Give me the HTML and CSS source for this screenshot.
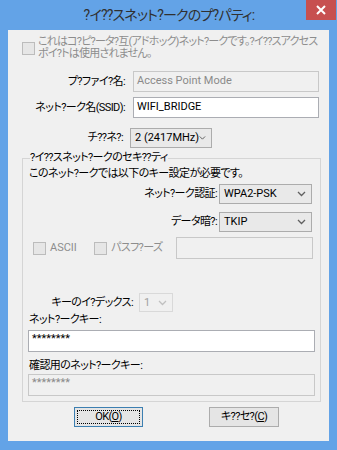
FILE: index.html
```html
<!DOCTYPE html>
<html>
<head>
    <title>ワイヤレスネットワークのプロパティ</title>
    <link rel="stylesheet" href="styles.css">
</head>
<body>
    <div class="window">
        <div class="titlebar">
            <div class="title">?イ??スネット?ークのプ?パティ:</div>
            <div class="close">
                <svg width="10" height="10" viewBox="0 0 10 10"><path d="M1 1 L9 9 M9 1 L1 9" stroke="#fff" stroke-width="2"/></svg>
            </div>
        </div>

        <div class="client">
            <div class="notice">
                <span class="check"></span>
                <span class="notice-text">これはコ?ピ?ータ?互(アドホック)ネット?ークです。?イ??スアクセス<br>ポイ?トは使用されません。</span>
            </div>

            <div class="field-row row-profile">
                <span class="label">プ?ファイ?名:</span>
                <div class="textbox disabled">Access Point Mode</div>
            </div>
            <div class="field-row row-ssid">
                <span class="label">ネット?ーク名(SSID):</span>
                <div class="textbox">WIFI_BRIDGE</div>
            </div>
            <div class="field-row row-channel">
                <span class="label">チ??ネ?:</span>
                <div class="combo combo-channel">
                    <span>2 (2417MHz)</span>
                    <svg class="chev" width="9" height="6" viewBox="0 0 9 6"><path d="M1 1 L4.5 4.5 L8 1" fill="none" stroke="#606060" stroke-width="1.3"/></svg>
                </div>
            </div>

            <fieldset class="group">
                <legend>?イ??スネット?ークのセキ??ティ</legend>
                <div class="group-intro">このネット?ークでは以下のキー設定が必要です。</div>

                <div class="sec-row row-auth">
                    <span class="sec-label">ネット?ーク認証:</span>
                    <div class="combo combo-sec">
                        <span>WPA2-PSK</span>
                        <svg class="chev" width="9" height="6" viewBox="0 0 9 6"><path d="M1 1 L4.5 4.5 L8 1" fill="none" stroke="#606060" stroke-width="1.3"/></svg>
                    </div>
                </div>
                <div class="sec-row row-data">
                    <span class="sec-label">データ暗?:</span>
                    <div class="combo combo-sec">
                        <span>TKIP</span>
                        <svg class="chev" width="9" height="6" viewBox="0 0 9 6"><path d="M1 1 L4.5 4.5 L8 1" fill="none" stroke="#606060" stroke-width="1.3"/></svg>
                    </div>
                </div>

                <div class="pass-row">
                    <span class="check"></span>
                    <span class="check-label ascii">ASCII</span>
                    <span class="check"></span>
                    <span class="check-label">パスフ?ーズ</span>
                    <div class="textbox disabled pass-box"></div>
                </div>

                <div class="index-row">
                    <span class="index-label">キーのイ?デックス:</span>
                    <div class="combo combo-index disabled">
                        <span>1</span>
                        <svg class="chev" width="9" height="6" viewBox="0 0 9 6"><path d="M1 1 L4.5 4.5 L8 1" fill="none" stroke="#c0c0c0" stroke-width="1.3"/></svg>
                    </div>
                </div>

                <div class="key-label">ネット?ークキー:</div>
                <div class="textbox key-box">********</div>
                <div class="key-label confirm-label">確認用のネット?ークキー:</div>
                <div class="textbox key-box disabled confirm-box">********</div>
            </fieldset>

            <div class="buttons">
                <div class="button default"><span class="focus">OK(<u>O</u>)</span></div>
                <div class="button">キ??セ?(<u>C</u>)</div>
            </div>
        </div>
    </div>
</body>
</html>
```

FILE: styles.css
```css
body {
    margin: 0;
    font-family: Roboto, "Noto Sans CJK JP", sans-serif;
    font-size: 11px;
    line-height: 12px;
    letter-spacing: -0.6px;
    color: #000;
    font-feature-settings: "palt";
    white-space: nowrap;
}
.window {
    width: 337px;
    height: 450px;
    box-sizing: border-box;
    padding: 0 8px 9px 8px;
    background: #63a3e7;
    display: flex;
    flex-direction: column;
}
.titlebar {
    height: 30px;
    display: flex;
    align-items: flex-start;
    margin-right: -7px;
}
.title {
    flex: 1;
    padding-left: 24px;
    text-align: center;
    font-size: 14px;
    line-height: 30px;
    letter-spacing: -0.8px;
    color: #303030;
}
.close {
    width: 30px;
    height: 20px;
    background: #c75050;
    display: flex;
    align-items: center;
    justify-content: center;
}
.client {
    flex: 1;
    background: #f0f0f0;
    padding-top: 7px;
}
.notice {
    display: flex;
    align-items: center;
    padding-left: 14px;
    color: #8d8d8d;
}
.check {
    width: 11px;
    height: 11px;
    border: 1px solid #bcbcbc;
    background: #e6e6e6;
    flex: none;
}
.notice-text {
    margin-left: 3px;
    margin-top: -1px;
    letter-spacing: -0.8px;
}
.field-row {
    display: flex;
    align-items: center;
}
.row-profile {
    margin-top: 11px;
}
.row-ssid {
    margin-top: 5px;
}
.row-channel {
    margin-top: 10px;
}
.label {
    width: 117px;
    text-align: right;
    margin-right: 8px;
}
.row-channel .label {
    width: 115px;
    margin-right: 7px;
}
.textbox {
    width: 186px;
    height: 21px;
    box-sizing: border-box;
    border: 1px solid #abadb3;
    background: #fff;
    padding: 3px 0 0 3px;
    letter-spacing: 0;
}
.textbox.disabled {
    background: #f0f0f0;
    border-color: #c8c8c8;
    color: #8a8a8a;
}
.combo {
    height: 20px;
    box-sizing: border-box;
    border: 1px solid #acacac;
    background: #e9e9e9;
    display: flex;
    align-items: center;
    justify-content: space-between;
    padding: 0 5px 0 4px;
    letter-spacing: 0;
}
.combo.disabled {
    border-color: #d9d9d9;
    background: #f0f0f0;
    color: #a0a0a0;
}
.combo-channel {
    width: 82px;
}
.group {
    margin: 4px 8px 0 14px;
    padding: 0 5px 5px 6px;
    border: 1px solid #d5d5d5;
}
.group legend {
    padding: 0;
    margin-left: 1px;
}
.group-intro {
    margin-top: 4px;
}
.sec-row {
    display: flex;
    align-items: center;
    justify-content: flex-end;
    padding-right: 3px;
}
.row-auth {
    margin-top: 4px;
}
.row-data {
    margin-top: 8px;
}
.sec-label {
    margin-right: 2px;
}
.combo-sec {
    width: 93px;
}
.pass-row {
    display: flex;
    align-items: center;
    margin-top: 5px;
    padding-left: 4px;
    color: #8d8d8d;
}
.check-label {
    margin-left: 4px;
}
.ascii {
    width: 44px;
    letter-spacing: 0;
}
.pass-box {
    width: 137px;
    height: 22px;
    margin-left: auto;
    margin-right: 2px;
}
.index-row {
    display: flex;
    align-items: center;
    margin-top: 34px;
}
.index-label {
    width: 104px;
    text-align: right;
    margin-right: 6px;
}
.combo-index {
    width: 34px;
    height: 19px;
}
.key-label {
    margin-top: 2px;
}
.confirm-label {
    margin-top: 8px;
}
.key-box {
    width: auto;
    height: 22px;
    margin: 4px 0 0 -1px;
    padding-top: 2px;
}
.confirm-box {
    margin-top: 2px;
}
.buttons {
    display: flex;
    gap: 66px;
    padding-left: 66px;
    margin-top: 5px;
}
.button {
    width: 70px;
    height: 20px;
    box-sizing: border-box;
    border: 1px solid #acacac;
    background: #e5e5e5;
    display: flex;
    align-items: center;
    justify-content: center;
}
.button.default {
    width: 69px;
    border-color: #3c7fb1;
    padding: 2px;
}
.focus {
    flex: 1;
    align-self: stretch;
    border: 1px dotted #000;
    display: flex;
    align-items: center;
    justify-content: center;
}
```
